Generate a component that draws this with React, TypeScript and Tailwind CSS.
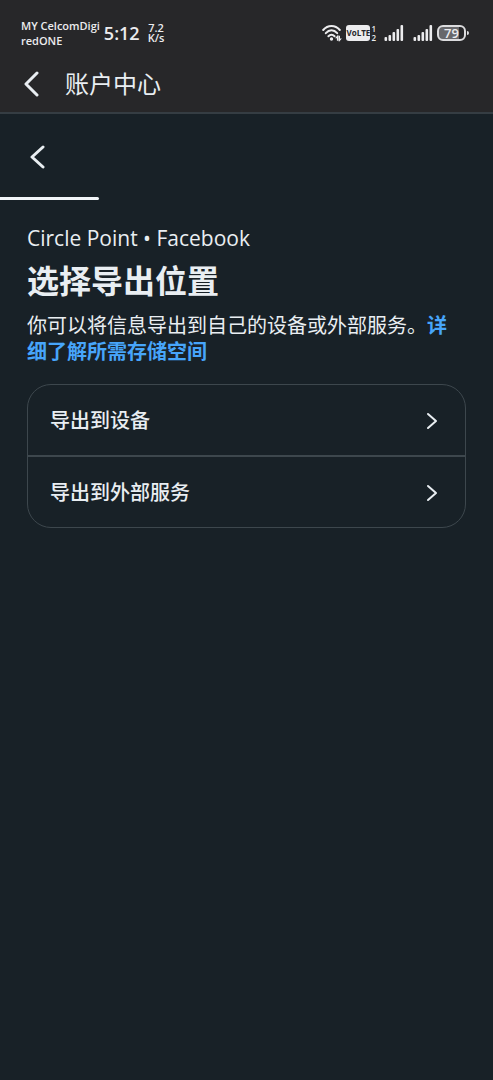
import React from "react";

const Chevron = ({ d, width, height, stroke = 2 }: { d: string; width: number; height: number; stroke?: number }) => {
  return (
    <svg
      width={width}
      height={height}
      viewBox={`0 0 ${width} ${height}`}
      fill="none"
      stroke="currentColor"
      strokeWidth={stroke}
      strokeLinecap="round"
      strokeLinejoin="round"
      aria-hidden="true"
    >
      <path d={d} />
    </svg>
  );
};

const WifiIcon = () => {
  return (
    <svg width="20" height="18" viewBox="0 0 20 18" fill="none" stroke="currentColor" strokeLinecap="round" aria-label="Wi-Fi">
      <path d="M1.2 6C5.8.6 13.2.6 17.8 6" strokeWidth="2" />
      <path d="M3.8 9.2c3.4-3.8 8-3.8 11.4 0" strokeWidth="2" />
      <path d="M6.4 12.2c2-2.1 4.2-2.1 6.2 0" strokeWidth="2" />
      <circle cx="9.5" cy="15" r="1.7" fill="currentColor" stroke="none" />
      <path d="M15.6 11.2 13 14.2h1.9v2.6h1.5v-5.6zM17.3 17.4l2.6-3H18v-2.6h-1.3v5.6z" fill="currentColor" stroke="none" />
    </svg>
  );
};

const SignalIcon = () => {
  return (
    <svg width="20" height="18" viewBox="0 0 20 18" fill="currentColor" aria-label="Signal">
      <rect x="0.5" y="13" width="2.6" height="4" rx="1" />
      <rect x="4.5" y="11" width="2.6" height="6" rx="1" />
      <rect x="8.5" y="8" width="2.6" height="9" rx="1" />
      <rect x="12.5" y="5" width="2.6" height="12" rx="1" />
      <rect x="16.5" y="1" width="2.6" height="16" rx="1" />
    </svg>
  );
};

const StatusBar = () => {
  return (
    <div className="flex h-14 items-center justify-between pt-[10px] pr-6 pl-[21px] font-semibold text-[#ececee]">
      <div className="flex items-center gap-1">
        <div className="text-[11px] leading-[15px]">
          MY CelcomDigi
          <br />
          redONE
        </div>
        <div className="text-lg leading-5">5:12</div>
        <div className="ml-1 text-center text-[11px] leading-[10px]">
          7.2
          <br />
          K/s
        </div>
      </div>
      <div className="flex items-center">
        <WifiIcon />
        <span className="ml-1 flex h-4 w-6 items-center justify-center rounded-[3px] bg-[#ececee] text-[8px] font-bold text-[#27272a]">
          VoLTE
        </span>
        <span className="ml-px text-[8px] leading-[9px]">
          1<br />2
        </span>
        <div className="ml-2 flex gap-[9px]">
          <SignalIcon />
          <SignalIcon />
        </div>
        <div className="ml-1 flex items-center gap-px">
          <span className="flex h-4 w-[29px] items-center justify-center rounded-md border-2 border-[#dcdcde] bg-linear-to-r from-[#68686b] from-79% to-[#272729] to-79% text-[13px] leading-3">
            79
          </span>
          <span className="h-1 w-0.5 rounded-r bg-[#dcdcde]"></span>
        </div>
      </div>
    </div>
  );
};

const options = ["导出到设备", "导出到外部服务"];

const App = () => {
  return (
    <div className="min-h-screen bg-[#182127] font-['Open_Sans','Noto_Sans_CJK_SC',sans-serif] text-[#e9eef2]">
      <header className="border-b-2 border-[#353d43] bg-[#272729]">
        <StatusBar />
        <div className="flex h-14 items-center gap-[26px] pl-6">
          <button type="button" aria-label="返回">
            <Chevron width={15} height={26} d="M13 2 2 13l11 11" stroke={3} />
          </button>
          <h1 className="text-2xl font-normal">账户中心</h1>
        </div>
      </header>

      <div className="flex h-[83px] items-center pt-0.5 pl-[30px]">
        <button type="button" aria-label="上一步">
          <Chevron width={15} height={24} d="M13 2 2 12l11 10" stroke={3} />
        </button>
      </div>
      <div className="h-[3px] w-1/5 rounded-r-full bg-[#f1f5f8]"></div>

      <main className="px-[27px] pt-6">
        <p className="text-[21px] leading-7">Circle Point • Facebook</p>
        <h2 className="mt-2 text-[32px] leading-[42px] font-bold">选择导出位置</h2>
        <p className="mt-[11px] text-xl leading-[26px]">
          你可以将信息导出到自己的设备或外部服务。
          <a href="#" className="font-bold text-[#47a5fa]">
            详细了解所需存储空间
          </a>
        </p>

        <ul className="mt-[19px] divide-y-2 divide-[#3d474d] rounded-3xl border border-[#3d474d]">
          {options.map((option) => (
            <li key={option}>
              <button type="button" className="flex h-[70px] w-full items-center justify-between pt-0.5 pr-[27px] pl-[22px] text-xl font-medium">
                {option}
                <Chevron width={12} height={18} d="M2 2l8 7-8 7" />
              </button>
            </li>
          ))}
        </ul>
      </main>
    </div>
  );
};

export default App;
